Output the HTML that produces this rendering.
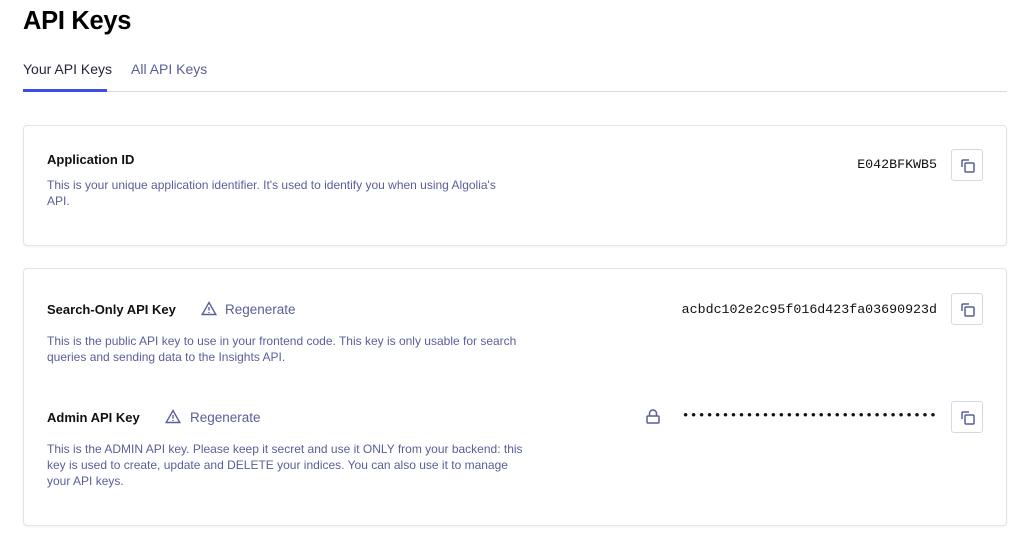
<!DOCTYPE html>
<html><head><style>
*{box-sizing:border-box;margin:0;padding:0}
body{width:1028px;height:550px;background:#fff;font-family:"Liberation Sans",sans-serif;position:relative;overflow:hidden;color:#111}
.a{position:absolute;white-space:nowrap}
h1{position:absolute;left:23px;top:7px;font-size:25.5px;font-weight:bold;color:#000;letter-spacing:-0.3px}
.tab{font-size:14px;top:61px}
.card{position:absolute;left:23px;width:984px;border:1px solid #e3e4ea;border-radius:4px;box-shadow:0 1px 2px rgba(0,0,0,.06)}
.t{font-size:13px;font-weight:bold;color:#111}
.d{font-size:12px;color:#5a5e9a;line-height:16px;white-space:normal}
.m{font-family:"Liberation Mono",monospace;font-size:13.3px;color:#111;text-align:right}
.btn{position:absolute;width:32px;height:32px;border:1px solid #d6d6e7;border-radius:3px;background:#fff}
.btn svg{position:absolute;left:8px;top:8px}
.rg{font-size:13.5px;color:#5a5e9a}
</style></head><body>
<h1>API Keys</h1>
<div class="a tab" style="left:23px;color:#23263b">Your API Keys</div>
<div class="a tab" style="left:131px;color:#5a5e9a">All API Keys</div>
<div class="a" style="left:23px;top:91px;width:984px;height:1px;background:#d6d6e7"></div>
<div class="a" style="left:23px;top:89px;width:84px;height:3px;background:#3c4fe0"></div>

<div class="card" style="top:125px;height:121px"></div>
<div class="a t" style="left:47px;top:152px">Application ID</div>
<div class="a d" style="left:47px;top:177px;width:462px">This is your unique application identifier. It's used to identify you when using Algolia's API.</div>
<div class="a m" style="right:91px;top:157px">E042BFKWB5</div>
<div class="btn" style="left:951px;top:149px"><svg width="16" height="16" viewBox="0 0 16 16" fill="none" stroke="#5a5e9a" stroke-width="1.5"><rect x="5" y="5" width="9" height="9" rx="1"/><path d="M2 9V3a1 1 0 0 1 1-1h6"/></svg></div>

<div class="card" style="top:268px;height:258px"></div>
<div class="a t" style="left:47px;top:302px">Search-Only API Key</div>
<svg class="a" style="left:201px;top:301px" width="16" height="15" viewBox="0 0 16 15" fill="none" stroke="#5a5e9a" stroke-width="1.4"><path d="M8 1.5L14.8 13.5H1.2Z"/><path d="M8 6v3.5M8 11v1"/></svg>
<div class="a rg" style="left:225px;top:302px">Regenerate</div>
<div class="a d" style="left:47px;top:333px;width:476px">This is the public API key to use in your frontend code. This key is only usable for search queries and sending data to the Insights API.</div>
<div class="a m" style="right:91px;top:302px">acbdc102e2c95f016d423fa03690923d</div>
<div class="btn" style="left:951px;top:293px"><svg width="16" height="16" viewBox="0 0 16 16" fill="none" stroke="#5a5e9a" stroke-width="1.5"><rect x="5" y="5" width="9" height="9" rx="1"/><path d="M2 9V3a1 1 0 0 1 1-1h6"/></svg></div>

<div class="a t" style="left:47px;top:410px">Admin API Key</div>
<svg class="a" style="left:165px;top:409px" width="16" height="15" viewBox="0 0 16 15" fill="none" stroke="#5a5e9a" stroke-width="1.4"><path d="M8 1.5L14.8 13.5H1.2Z"/><path d="M8 6v3.5M8 11v1"/></svg>
<div class="a rg" style="left:190px;top:410px">Regenerate</div>
<div class="a d" style="left:47px;top:441px;width:482px">This is the ADMIN API key. Please keep it secret and use it ONLY from your backend: this key is used to create, update and DELETE your indices. You can also use it to manage your API keys.</div>
<svg class="a" style="left:645px;top:408px" width="16" height="16" viewBox="0 0 16 16" fill="none" stroke="#5a5e9a" stroke-width="1.5"><rect x="2" y="8" width="12" height="7" rx="1"/><path d="M4.5 8V5.5a3.5 3.5 0 0 1 7 0V8"/></svg>
<div class="a m" style="right:91px;top:408px;letter-spacing:0">••••••••••••••••••••••••••••••••</div>
<div class="btn" style="left:951px;top:401px"><svg width="16" height="16" viewBox="0 0 16 16" fill="none" stroke="#5a5e9a" stroke-width="1.5"><rect x="5" y="5" width="9" height="9" rx="1"/><path d="M2 9V3a1 1 0 0 1 1-1h6"/></svg></div>
</body></html>
